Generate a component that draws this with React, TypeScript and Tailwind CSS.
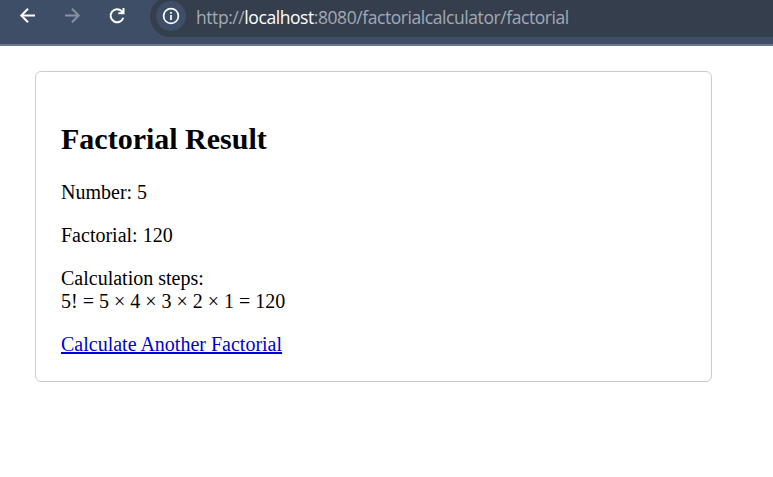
export default function App() {
  return (
    <div className="flex h-[477px] w-[773px] flex-col overflow-hidden bg-white font-['Liberation_Serif',serif] text-black">
      <header className="h-[46px] shrink-0 overflow-hidden border-b-2 border-[#6c7690] bg-[#3f4e67]">
        <div className="flex items-start">
          <nav className="flex w-[150px] shrink-0 gap-[27px] pt-[7px] pl-[19px]">
            <svg width="18" height="18" viewBox="0 0 18 18" fill="none" stroke="#fff" strokeWidth="2"><path d="M16 8.5H3M9 1.7L2.3 8.5L9 15.3" /></svg>
            <svg width="18" height="18" viewBox="0 0 18 18" fill="none" stroke="#8590a2" strokeWidth="2"><path d="M1 8.5H14M8 1.7L14.7 8.5L8 15.3" /></svg>
            <svg width="18" height="18" viewBox="0 0 18 18" fill="none" stroke="#fff" strokeWidth="2"><path d="M14.3 10.8A6.5 6.5 0 1 1 12.7 4.1L13.7 5.1" /><path d="M15.5 1V7.2H9.3V5.2H11.8L13.5 3.5V1Z" fill="#fff" stroke="none" /></svg>
          </nav>
          <div className="-mt-[4px] flex h-[41px] flex-1 items-start rounded-l-full bg-[#353e4d] pt-[4px]">
            <div className="mt-[1px] ml-[6px] flex size-[30px] items-center justify-center rounded-full bg-[#3f4e67]">
              <svg width="18" height="18" viewBox="0 0 18 18" fill="none" stroke="#fff" strokeWidth="1.7"><circle cx="9" cy="9" r="7.4" /><path d="M9 8v5M9 4.9v1.8" /></svg>
            </div>
            <p className="pt-[4px] pl-[10px] font-['Open_Sans',sans-serif] text-[17.5px] leading-[26px] tracking-[-0.43px] text-[#a3aab4]">http://<span className="text-white">localhost</span>:8080/factorialcalculator/factorial</p>
          </div>
        </div>
      </header>
      <main className="mt-[25px] ml-[35px] h-[311px] w-[677px] rounded-[6px] border border-[#ccc] px-[25px] pt-[49px] text-[20px] leading-[23px]">
        <h2 className="text-[30px] leading-[36px] font-bold">Factorial Result</h2>
        <p className="mt-[24px]">Number: 5</p>
        <p className="mt-[20px]">Factorial: 120</p>
        <p className="mt-[20px]">Calculation steps:<br />5! = 5 × 4 × 3 × 2 × 1 = 120</p>
        <a href="#" className="mt-[20px] inline-block text-[#0000d8] underline decoration-2 underline-offset-[1px]">Calculate Another Factorial</a>
      </main>
    </div>
  );
}
